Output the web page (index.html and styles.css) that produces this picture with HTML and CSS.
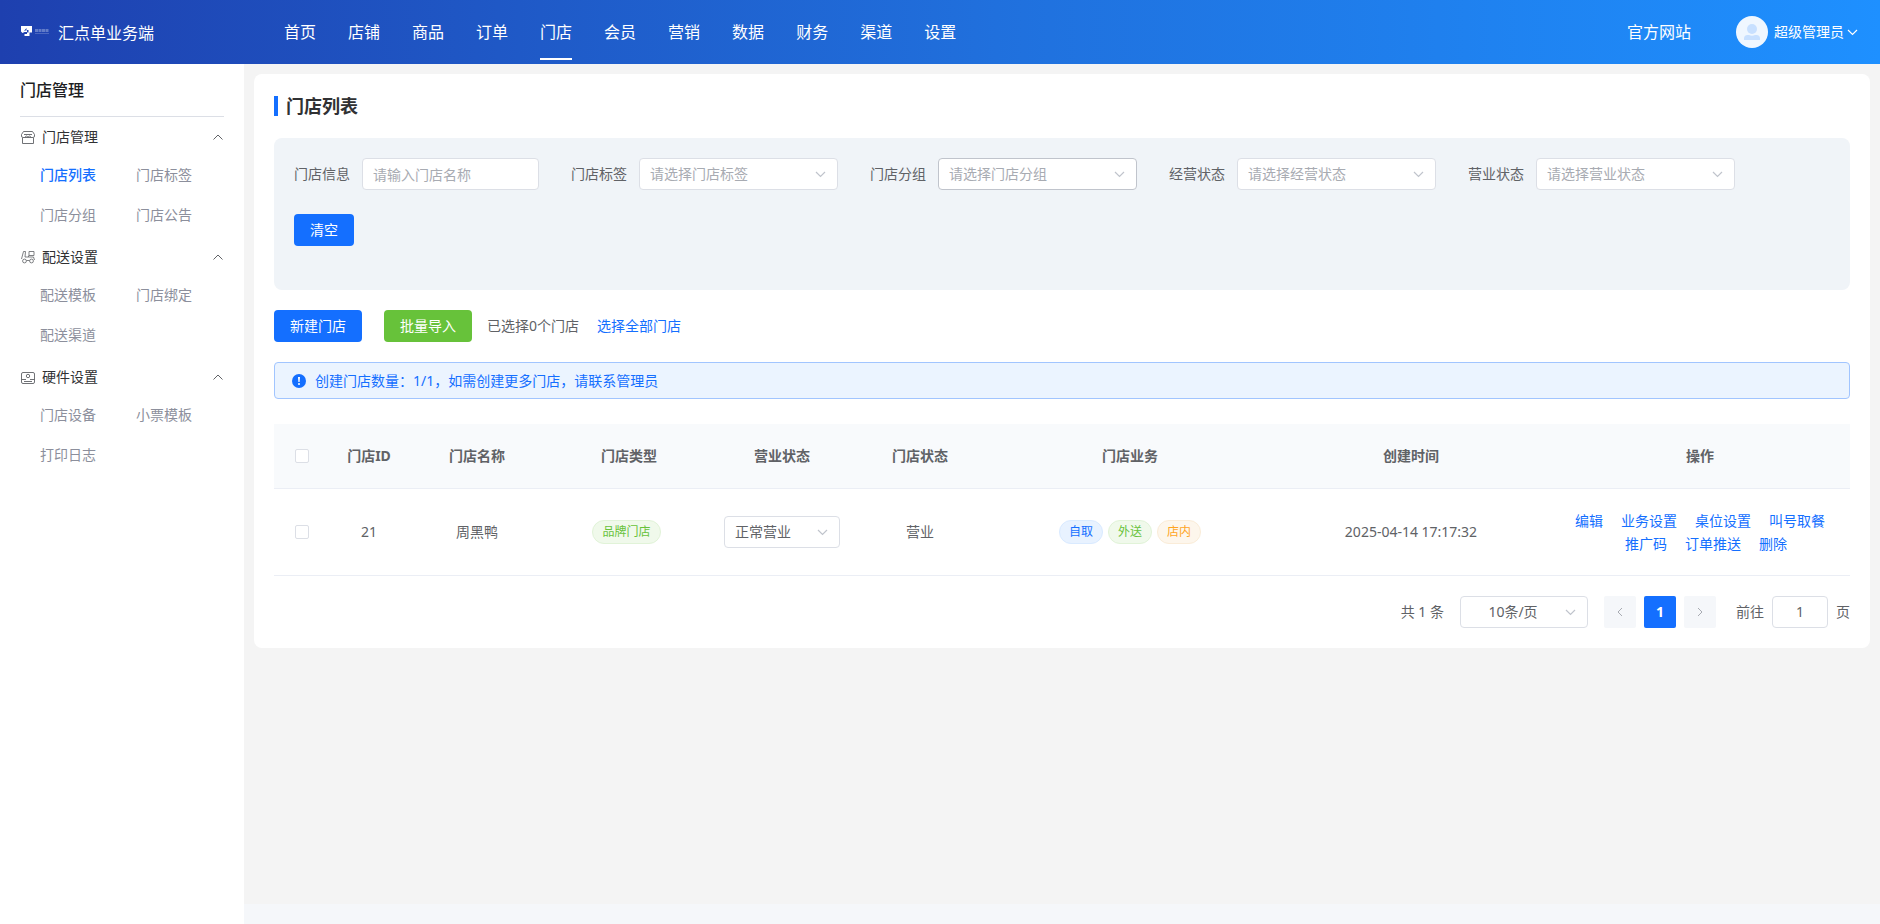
FILE: index.html
```html
<!DOCTYPE html>
<html lang="zh-CN">
<head>
    <meta charset="UTF-8">
    <meta name="viewport" content="width=device-width, initial-scale=1.0">
    <title>门店列表</title>
    <link rel="stylesheet" href="styles.css">
</head>
<body>
    <!-- shared icons -->
    <svg class="sprite" width="0" height="0" aria-hidden="true">
        <symbol id="arrow-down" viewBox="0 0 14 14">
            <path d="M2 5l4.500 4.500L11 5" fill="none" stroke="currentColor" stroke-width="1.200"/>
        </symbol>
        <symbol id="arrow-up" viewBox="0 0 14 14">
            <path d="M3.500 9.500L8 5l4.500 4.500" fill="none" stroke="currentColor"/>
        </symbol>
        <symbol id="arrow-left" viewBox="0 0 14 14">
            <path d="M9 3L5 7l4 4" fill="none" stroke="currentColor"/>
        </symbol>
        <symbol id="arrow-right" viewBox="0 0 14 14">
            <path d="M5 3l4 4-4 4" fill="none" stroke="currentColor"/>
        </symbol>
    </svg>

    <header class="header">
        <div class="brand">
            <svg class="logo" width="30" height="14" viewBox="0 0 30 14" aria-hidden="true">
                <path d="M1 0h11v6.500H9.500V10H4.500V8H7V6H4.500L2.500 7 1 5.500z" fill="#fff"/>
                <path d="M3.500 5.500L6.500 2v2.500h-1.500zM7 4h1.500v2.500H7z" fill="#1e42b1"/>
                <g fill="#fff">
                    <path d="M15 3h3v3h-3zM18.500 3h3v3h-3zM22 3h3v3h-3zM25.500 3h3v3h-3z" opacity=".3"/>
                    <path d="M15 7h14v1H15z" opacity=".2"/>
                </g>
            </svg>
            <span>汇点单业务端</span>
        </div>
        <nav class="top-nav">
            <a href="#">首页</a>
            <a href="#">店铺</a>
            <a href="#">商品</a>
            <a href="#">订单</a>
            <a href="#" class="active">门店</a>
            <a href="#">会员</a>
            <a href="#">营销</a>
            <a href="#">数据</a>
            <a href="#">财务</a>
            <a href="#">渠道</a>
            <a href="#">设置</a>
        </nav>
        <div class="header-right">
            <a href="#" class="site-link">官方网站</a>
            <button type="button" class="user">
                <svg width="32" height="32" viewBox="0 0 32 32" aria-hidden="true">
                    <circle cx="16" cy="16" r="16" fill="#f0f7ff"/>
                    <circle cx="16" cy="13" r="5" fill="#c8e0ff"/>
                    <path d="M8 24v-1.500a3.500 3.500 0 0 1 3.500-3.500h1.500q3 1.500 6 0h1.500a3.500 3.500 0 0 1 3.500 3.500V24z" fill="#c8e0ff"/>
                </svg>
                <span>超级管理员</span>
                <svg class="user-arrow" width="14" height="14"><use href="#arrow-down"/></svg>
            </button>
        </div>
    </header>

    <div class="layout">
        <aside class="sidebar">
            <h2>门店管理</h2>
            <section class="menu-group">
                <button type="button" class="menu-title">
                    <svg width="16" height="16" viewBox="0 0 16 16" aria-hidden="true">
                        <g fill="none" stroke="currentColor" stroke-width=".9">
                            <path d="M3.500 2.500h9l2 3v1.500a1.500 1.500 0 0 1-1.500 1.500H3A1.500 1.500 0 0 1 1.500 7V5.500z"/>
                            <path d="M4 5.500h8M5 8.500q.5-1.500 1.500-1.500T8 8.500Q8.500 7 9.500 7T11 8.500"/>
                            <path d="M2.500 9v5.500h11V9"/>
                        </g>
                    </svg>
                    <span>门店管理</span>
                    <svg class="fold" width="14" height="14"><use href="#arrow-up"/></svg>
                </button>
                <div class="menu-items">
                    <a href="#" class="active">门店列表</a>
                    <a href="#">门店标签</a>
                    <a href="#">门店分组</a>
                    <a href="#">门店公告</a>
                </div>
            </section>
            <section class="menu-group">
                <button type="button" class="menu-title">
                    <svg width="16" height="16" viewBox="0 0 16 16" aria-hidden="true">
                        <g fill="none" stroke="currentColor" stroke-width=".8">
                            <path d="M3.500 2.500h2l-.5 5.500h3.500V6.500M3.500 2.500L1.500 10M9 2.500h5v4H9zM8.500 8h5l1 3M6.500 11.500h3"/>
                            <circle cx="4.500" cy="12" r="1.900"/>
                            <circle cx="11.500" cy="12" r="1.900"/>
                        </g>
                    </svg>
                    <span>配送设置</span>
                    <svg class="fold" width="14" height="14"><use href="#arrow-up"/></svg>
                </button>
                <div class="menu-items">
                    <a href="#">配送模板</a>
                    <a href="#">门店绑定</a>
                    <a href="#">配送渠道</a>
                </div>
            </section>
            <section class="menu-group">
                <button type="button" class="menu-title">
                    <svg width="16" height="16" viewBox="0 0 16 16" aria-hidden="true">
                        <g fill="none" stroke="currentColor" stroke-width=".9">
                            <rect x="1.500" y="3.500" width="13" height="11" rx="1.500"/>
                            <circle cx="8" cy="7" r="1.700"/>
                            <path d="M1.500 10.500h4.500M10 10.500h4.500M4 12.500h8"/>
                        </g>
                    </svg>
                    <span>硬件设置</span>
                    <svg class="fold" width="14" height="14"><use href="#arrow-up"/></svg>
                </button>
                <div class="menu-items">
                    <a href="#">门店设备</a>
                    <a href="#">小票模板</a>
                    <a href="#">打印日志</a>
                </div>
            </section>
        </aside>

        <main class="main">
            <div class="card">
                <h1>门店列表</h1>

                <form class="filter">
                    <div class="field">
                        <label for="store-name">门店信息</label>
                        <input type="text" id="store-name" class="control name-input" placeholder="请输入门店名称">
                    </div>
                    <div class="field">
                        <label for="store-tag">门店标签</label>
                        <div class="select filter-select">
                            <select id="store-tag" class="control empty"><option>请选择门店标签</option></select>
                            <svg width="14" height="14"><use href="#arrow-down"/></svg>
                        </div>
                    </div>
                    <div class="field">
                        <label for="store-group">门店分组</label>
                        <div class="select filter-select">
                            <select id="store-group" class="control empty hovered"><option>请选择门店分组</option></select>
                            <svg width="14" height="14"><use href="#arrow-down"/></svg>
                        </div>
                    </div>
                    <div class="field">
                        <label for="run-status">经营状态</label>
                        <div class="select filter-select">
                            <select id="run-status" class="control empty"><option>请选择经营状态</option></select>
                            <svg width="14" height="14"><use href="#arrow-down"/></svg>
                        </div>
                    </div>
                    <div class="field">
                        <label for="open-status">营业状态</label>
                        <div class="select filter-select">
                            <select id="open-status" class="control empty"><option>请选择营业状态</option></select>
                            <svg width="14" height="14"><use href="#arrow-down"/></svg>
                        </div>
                    </div>
                    <div class="field">
                        <button type="reset" class="btn btn-primary">清空</button>
                    </div>
                </form>

                <div class="toolbar">
                    <button type="button" class="btn btn-primary">新建门店</button>
                    <button type="button" class="btn btn-success">批量导入</button>
                    <p>已选择0个门店<a href="#">选择全部门店</a></p>
                </div>

                <div class="alert">
                    <svg width="14" height="14" viewBox="0 0 14 14" aria-hidden="true">
                        <circle cx="7" cy="7" r="7" fill="currentColor"/>
                        <path d="M6 3h2l-.4 5H6.400z" fill="#fff"/>
                        <circle cx="7" cy="10" r="1" fill="#fff"/>
                    </svg>
                    <span>创建门店数量：1/1，如需创建更多门店，请联系管理员</span>
                </div>

                <table class="table">
                    <colgroup>
                        <col class="col-check">
                        <col class="col-id">
                        <col class="col-name">
                        <col class="col-type">
                        <col class="col-open">
                        <col class="col-status">
                        <col class="col-business">
                        <col class="col-time">
                        <col class="col-action">
                    </colgroup>
                    <thead>
                        <tr>
                            <th><input type="checkbox" aria-label="全选"></th>
                            <th>门店ID</th>
                            <th>门店名称</th>
                            <th>门店类型</th>
                            <th>营业状态</th>
                            <th>门店状态</th>
                            <th>门店业务</th>
                            <th>创建时间</th>
                            <th>操作</th>
                        </tr>
                    </thead>
                    <tbody>
                        <tr>
                            <td><input type="checkbox" aria-label="选择周黑鸭"></td>
                            <td>21</td>
                            <td>周黑鸭</td>
                            <td><span class="tag tag-success">品牌门店</span></td>
                            <td>
                                <div class="select row-select">
                                    <select class="control" aria-label="营业状态"><option>正常营业</option></select>
                                    <svg width="14" height="14"><use href="#arrow-down"/></svg>
                                </div>
                            </td>
                            <td>营业</td>
                            <td>
                                <div class="tags">
                                    <span class="tag">自取</span>
                                    <span class="tag tag-success">外送</span>
                                    <span class="tag tag-warning">店内</span>
                                </div>
                            </td>
                            <td>2025-04-14 17:17:32</td>
                            <td>
                                <div class="actions"><a href="#">编辑</a><a href="#">业务设置</a><a href="#">桌位设置</a><a href="#">叫号取餐</a><a href="#">推广码</a><a href="#">订单推送</a><a href="#">删除</a></div>
                            </td>
                        </tr>
                    </tbody>
                </table>

                <div class="pagination">
                    <span>共 1 条</span>
                    <div class="select size-select">
                        <select class="control" aria-label="每页条数"><option>10条/页</option></select>
                        <svg width="14" height="14"><use href="#arrow-down"/></svg>
                    </div>
                    <div class="pager">
                        <button type="button" aria-label="上一页" disabled><svg width="14" height="14"><use href="#arrow-left"/></svg></button>
                        <button type="button" class="current">1</button>
                        <button type="button" aria-label="下一页" disabled><svg width="14" height="14"><use href="#arrow-right"/></svg></button>
                    </div>
                    <div class="jump">
                        <label for="page">前往</label>
                        <input type="text" id="page" class="control" value="1">
                        <span>页</span>
                    </div>
                </div>
            </div>
        </main>
    </div>
</body>
</html>
```
FILE: styles.css
```css
* {
    box-sizing: border-box;
}

body {
    margin: 0;
    min-height: 100vh;
    display: flex;
    flex-direction: column;
    background: #f5f7fa;
    color: #606266;
    font-family: "Noto Sans", "Noto Sans CJK SC", sans-serif;
    font-size: 14px;
    line-height: 20px;
}

a {
    color: #146fff;
    text-decoration: none;
}

button, input, select {
    font: inherit;
    color: inherit;
}

button {
    border: none;
    padding: 0;
    background: none;
    cursor: pointer;
}

svg {
    display: block;
    flex: none;
}

.sprite {
    position: absolute;
}

/* header */
.header {
    display: flex;
    align-items: center;
    height: 64px;
    padding: 0 20px;
    background: linear-gradient(90deg, #1e40af, #2070dd 53%, #1e90ff);
    color: #fff;
    font-size: 16px;
}

.header a {
    color: #fff;
}

.brand {
    display: flex;
    align-items: center;
    gap: 8px;
    width: 264px;
    padding-top: 2px;
}

.top-nav {
    display: flex;
    align-self: flex-start;
    gap: 32px;
    padding-top: 6px;
}

.top-nav a {
    line-height: 52px;
    border-bottom: 2px solid transparent;
}

.top-nav .active {
    border-bottom-color: #fff;
}

.header-right {
    display: flex;
    align-items: center;
    gap: 45px;
    margin-left: auto;
}

.user {
    display: flex;
    align-items: center;
    font-size: 14px;
}

.user span {
    margin: 0 2px 0 6px;
}

/* sidebar */
.layout {
    display: flex;
    flex: 1;
}

.sidebar {
    flex: none;
    width: 244px;
    padding: 0 20px;
    background: #fff;
}

.sidebar h2 {
    margin: 0;
    height: 53px;
    line-height: 52px;
    border-bottom: 1px solid #dcdfe6;
    color: #1d1e23;
    font-size: 16px;
    font-weight: 500;
}

.menu-group {
    padding: 2px 0;
}

.menu-title {
    display: flex;
    align-items: center;
    gap: 6px;
    width: 100%;
    height: 36px;
    color: #303133;
}

.menu-title > svg {
    color: #606266;
}

.menu-title .fold {
    margin-left: auto;
}

.menu-items {
    display: grid;
    grid-template-columns: 96px 96px;
    padding-left: 20px;
}

.menu-items a {
    line-height: 40px;
    color: #8c8f9c;
}

.menu-items .active {
    color: #146fff;
    font-weight: 500;
}

/* content */
.main {
    flex: 1;
    min-width: 0;
    margin-bottom: 20px;
    padding: 10px;
    background: #f4f4f4;
}

.card {
    padding: 20px;
    background: #fff;
    border-radius: 8px;
}

.card h1 {
    display: flex;
    align-items: center;
    margin: 2px 0 22px;
    padding-left: 8px;
    border-left: 4px solid #146fff;
    color: #303133;
    font-size: 18px;
    font-weight: 700;
    line-height: 20px;
}

.control {
    display: block;
    width: 100%;
    height: 32px;
    padding: 0 10px;
    border: 1px solid #dcdfe6;
    border-radius: 4px;
    background: #fff;
    outline: none;
    appearance: none;
}

.control::placeholder {
    color: #a8abb2;
}

.select {
    position: relative;
}

.select svg {
    position: absolute;
    right: 10px;
    top: 9px;
    color: #c0c4cc;
    pointer-events: none;
}

.select .control {
    padding-right: 32px;
}

.select .empty {
    color: #a8abb2;
}

.select .hovered {
    border-color: #c0c4cc;
}

.filter {
    display: flex;
    flex-wrap: wrap;
    row-gap: 24px;
    padding: 20px 20px 44px;
    border-radius: 8px;
    background: #f0f4f8;
}

.field {
    display: flex;
    align-items: center;
    gap: 12px;
    margin-right: 32px;
}

.name-input {
    width: 177px;
}

.filter-select {
    width: 199px;
}

.btn {
    height: 32px;
    padding: 0 16px;
    border-radius: 4px;
    color: #fff;
}

.btn-primary {
    background: #146fff;
}

.btn-success {
    background: #67c23a;
}

.toolbar {
    display: flex;
    align-items: center;
    margin: 20px 0;
}

.btn-success {
    margin: 0 15px 0 22px;
}

.toolbar p {
    margin: 0;
}

.toolbar p a {
    margin-left: 18px;
}

.alert {
    display: flex;
    align-items: center;
    gap: 9px;
    height: 37px;
    padding: 0 17px;
    border: 1px solid #a1c5ff;
    border-radius: 4px;
    background: #ebf4ff;
    color: #146fff;
}

/* table */
.table {
    width: 100%;
    margin-top: 25px;
    border-collapse: collapse;
    table-layout: fixed;
    text-align: center;
}

.table th,
.table td {
    padding: 0 12px;
    border-bottom: 1px solid #ebeef5;
}

.table th {
    height: 64px;
    background: #f8fafc;
    font-weight: 700;
}

.table td {
    height: 87px;
}

.table input {
    display: block;
    width: 14px;
    height: 14px;
    margin: 0 auto;
    border: 1px solid #dcdfe6;
    border-radius: 2px;
    background: #fff;
    appearance: none;
}

.col-check {
    width: 56px;
}

.col-id {
    width: 78px;
}

.col-name {
    width: 138px;
}

.col-type {
    width: 166px;
}

.col-open {
    width: 140px;
}

.col-status {
    width: 136px;
}

.col-time {
    width: 278px;
}

.col-action {
    width: 300px;
}

.tags {
    display: flex;
    justify-content: center;
}

.tag {
    display: inline-block;
    height: 24px;
    margin-right: 5px;
    padding: 0 9px;
    border: 1px solid #d9eaff;
    border-radius: 12px;
    background: #e8f2ff;
    color: #146fff;
    font-size: 12px;
    line-height: 22px;
}

.tags .tag:last-child {
    margin-right: 0;
}

.tag-success {
    border-color: #e1f3d8;
    background: #f0f9eb;
    color: #67c23a;
}

.tag-warning {
    border-color: #faecd8;
    background: #fdf6ec;
    color: #ffa51f;
}

.row-select {
    width: 116px;
    margin: 0 auto;
}

.actions {
    line-height: 23px;
}

.actions a {
    display: inline-block;
    padding: 0 3px;
}

.actions a + a {
    margin-left: 12px;
}

/* pagination */
.pagination {
    display: flex;
    justify-content: flex-end;
    align-items: center;
    gap: 16px;
    margin-top: 20px;
}

.size-select {
    width: 128px;
}

.size-select select {
    text-align-last: center;
}

.pager {
    display: flex;
    gap: 8px;
}

.pager button {
    display: flex;
    align-items: center;
    justify-content: center;
    width: 32px;
    height: 32px;
    border-radius: 2px;
    background: #f5f7fa;
    color: #a8abb2;
}

.pager .current {
    background: #146fff;
    color: #fff;
    font-weight: 700;
}

.jump {
    display: flex;
    align-items: center;
    gap: 8px;
    margin-left: 4px;
}

.jump .control {
    width: 56px;
    text-align: center;
}
```
